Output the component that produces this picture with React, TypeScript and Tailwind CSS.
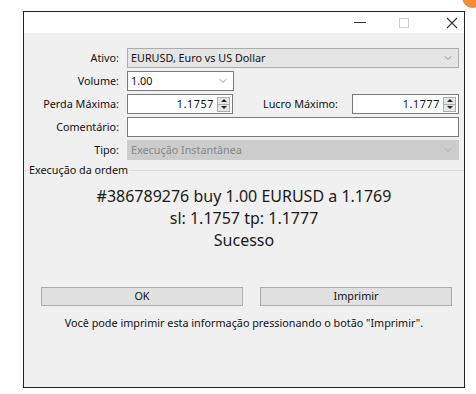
import { ChevronDown } from "lucide-react";

function Spin() {
  return (
    <div className="flex flex-col w-[13px] h-[15px] border border-[#adadad] bg-[#e6e6e6] mr-[2px]">
      <div className="flex-1 flex items-center justify-center border-b border-[#adadad]">
        <div className="w-0 h-0 border-l-[3px] border-r-[3px] border-b-[3px] border-l-transparent border-r-transparent border-b-[#222]" />
      </div>
      <div className="flex-1 flex items-center justify-center">
        <div className="w-0 h-0 border-l-[3px] border-r-[3px] border-t-[3px] border-l-transparent border-r-transparent border-t-[#222]" />
      </div>
    </div>
  );
}

function Label({ children }: { children: React.ReactNode }) {
  return <div className="w-[96px] shrink-0 text-right pr-[1px]">{children}</div>;
}

export default function App() {
  return (
    <div
      className="relative w-[476px] h-[394px] bg-white overflow-hidden text-[10.8px] text-[#111]"
      style={{ fontFamily: '"Segoe UI", Tahoma, "Noto Sans", sans-serif' }}
    >
      <div className="absolute -top-[14px] -right-[8px] w-[22px] h-[22px] rounded-full bg-[#f08a3c]" />

      <div className="ml-[23px] mt-[11px] w-[442px] h-[377px] border border-[#222] flex flex-col">
        {/* title bar */}
        <div className="h-[21px] bg-white flex items-center justify-end shrink-0">
          <div className="w-[12px] h-[1px] bg-[#333] mr-[33px]" />
          <div className="w-[10px] h-[10px] border border-[#cfcfcf] mr-[37px]" />
          <svg width="12" height="12" viewBox="0 0 12 12" className="mr-[6px]">
            <path d="M1 1 L11 11 M11 1 L1 11" stroke="#333" strokeWidth="1.1" />
          </svg>
        </div>

        <div className="flex-1 bg-[#f0f0f0] flex flex-col">
          <div className="flex flex-col gap-[3px] pt-[15px] pr-[5px]">
            <div className="flex items-center h-[20px] gap-[7px]">
              <Label>Ativo:</Label>
              <div className="flex-1 h-full flex items-center justify-between border border-[#acacac] bg-[#e5e5e5] pl-[3px] pr-[4px]">
                <span>EURUSD, Euro vs US Dollar</span>
                <ChevronDown className="w-[12px] h-[12px] text-[#777]" strokeWidth={1.5} />
              </div>
            </div>

            <div className="flex items-center h-[20px] gap-[7px]">
              <Label>Volume:</Label>
              <div className="w-[107px] h-full flex items-center justify-between border border-[#7a7a7a] bg-white pl-[3px] pr-[4px]">
                <span>1.00</span>
                <ChevronDown className="w-[12px] h-[12px] text-[#777]" strokeWidth={1.5} />
              </div>
            </div>

            <div className="flex items-center h-[20px] gap-[7px]">
              <Label>Perda Máxima:</Label>
              <div className="w-[106px] h-full flex items-center justify-end gap-[3px] border border-[#7a7a7a] bg-white">
                <span className="tracking-[0.6px]">1.1757</span>
                <Spin />
              </div>
              <div className="flex-1 text-right pr-[7px]">Lucro Máximo:</div>
              <div className="w-[107px] h-full flex items-center justify-end gap-[3px] border border-[#7a7a7a] bg-white">
                <span className="tracking-[0.6px]">1.1777</span>
                <Spin />
              </div>
            </div>

            <div className="flex items-center h-[20px] gap-[7px]">
              <Label>Comentário:</Label>
              <div className="flex-1 h-full border border-[#7a7a7a] bg-white" />
            </div>

            <div className="flex items-center h-[20px] gap-[7px]">
              <Label>Tipo:</Label>
              <div className="flex-1 h-full flex items-center justify-between border border-[#cccccc] bg-[#cccccc] pl-[3px] pr-[4px] text-[#888]">
                <span>Execução Instantânea</span>
                <ChevronDown className="w-[12px] h-[12px] text-[#aaa]" strokeWidth={1.5} />
              </div>
            </div>
          </div>

          {/* group box */}
          <div className="mt-[2px] h-[16px] flex items-center">
            <div className="w-[4px] h-[1px] bg-[#dcdcdc]" />
            <span className="px-[1px]">Execução da ordem</span>
            <div className="flex-1 h-[1px] bg-[#dcdcdc]" />
          </div>

          <div className="mt-[7px] flex flex-col items-center text-[16px] leading-[22px] text-[#1a1a1a]">
            <div>#386789276 buy 1.00 EURUSD a 1.1769</div>
            <div>sl: 1.1757 tp: 1.1777</div>
            <div>Sucesso</div>
          </div>

          <div className="mt-[36px] flex gap-[17px] pl-[17px] pr-[12px]">
            <div className="w-[202px] h-[19px] flex items-center justify-center border border-[#adadad] bg-[#e1e1e1]">OK</div>
            <div className="flex-1 h-[19px] flex items-center justify-center border border-[#adadad] bg-[#e1e1e1]">Imprimir</div>
          </div>

          <div className="mt-[9px] text-center">Você pode imprimir esta informação pressionando o botão "Imprimir".</div>
        </div>
      </div>
    </div>
  );
}
